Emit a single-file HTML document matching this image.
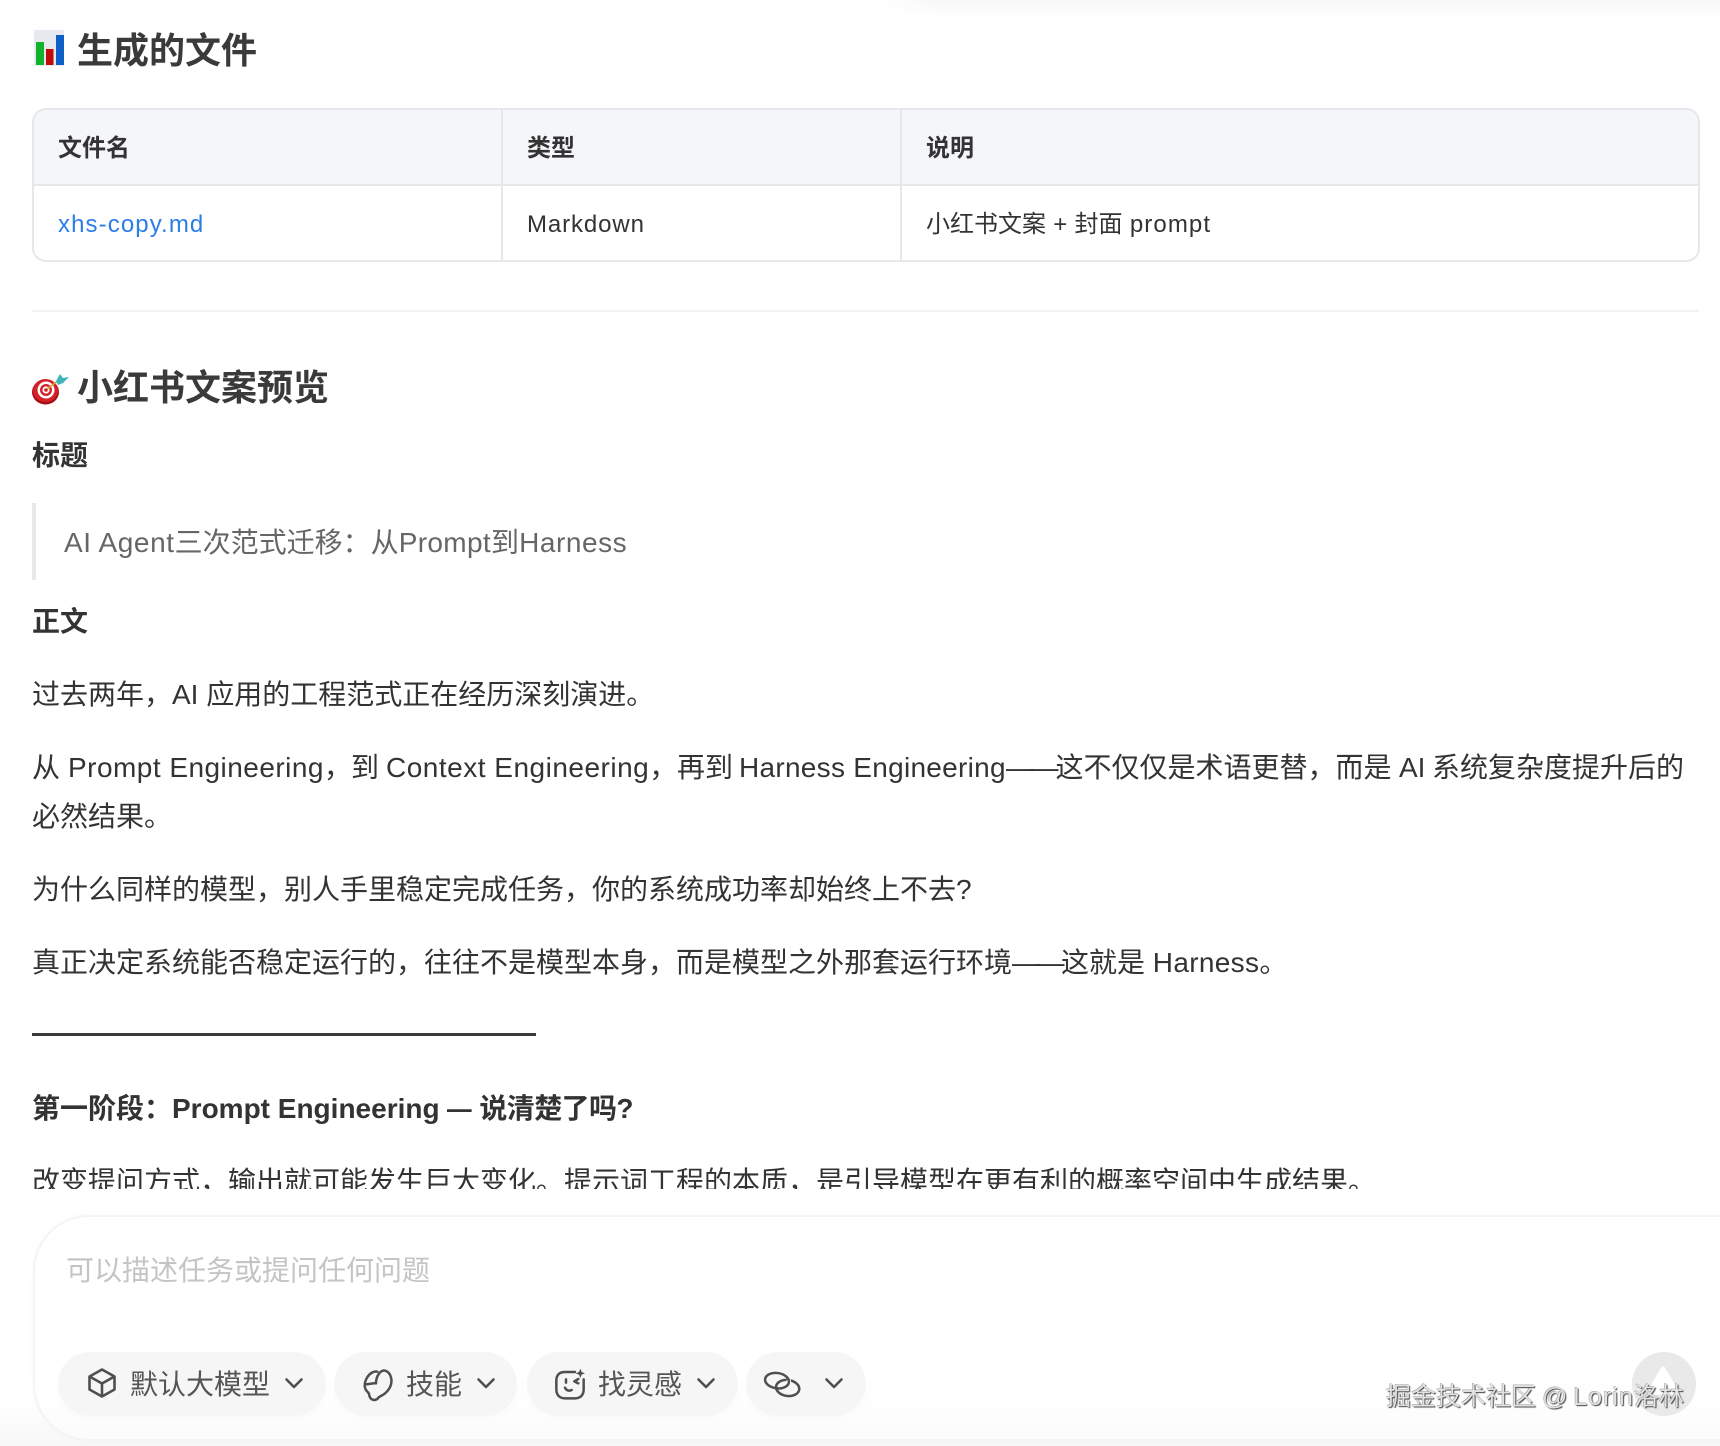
<!DOCTYPE html>
<html lang="zh-CN">
<head>
<meta charset="utf-8">
<title>小红书文案预览</title>
<style>
html,body{margin:0;padding:0;background:#fff}
body{width:1720px;height:1446px;position:relative;overflow:hidden;font-family:"Liberation Sans","Noto Sans CJK SC",sans-serif;color:#333;font-size:28px}
.t{position:absolute;white-space:nowrap;line-height:40px;height:40px}
.l{letter-spacing:.5px}
b,.b{font-weight:700}
h2{margin:0;position:absolute;font-size:36px;line-height:50px;font-weight:700;white-space:nowrap;color:#3a3a3a}
.a{position:absolute}
.pill{position:absolute;top:1352px;height:64px;background:#f6f6f6;border-radius:32px;box-shadow:0 4px 8px rgba(0,0,0,.012)}
svg{position:absolute;overflow:visible}
.ic{fill:none;stroke:#4f4f4f;stroke-linecap:round;stroke-linejoin:round}
.pt{position:absolute;top:1365px;line-height:40px;height:40px;font-size:28px;color:#555;white-space:nowrap}
</style>
</head>
<body>
<div class="a" style="left:880px;right:0;top:0;height:18px;background:linear-gradient(#f7f7f7,#fff);-webkit-mask-image:linear-gradient(90deg,transparent,#000 60px);mask-image:linear-gradient(90deg,transparent,#000 60px)"></div>

<svg style="left:0;top:0" width="80" height="70" viewBox="0 0 80 70">
<rect x="34" y="30" width="30" height="36" fill="#e6e9ef"/>
<rect x="36" y="42" width="8" height="23" fill="#10b32c"/>
<rect x="46" y="49" width="7.5" height="16" fill="#c00a0c"/>
<rect x="56" y="35" width="8" height="30" fill="#0f5fc8"/>
</svg>
<h2 style="left:77px;top:26px">生成的文件</h2>

<div class="a" style="left:32px;top:108px;width:1668px;height:154px;box-sizing:border-box;border:2px solid #e6e7ea;border-radius:14px;overflow:hidden">
  <div class="a" style="left:0;top:0;right:0;height:74px;background:#f5f6fa;border-bottom:2px solid #e6e7ea"></div>
  <div class="a" style="left:467px;top:0;bottom:0;width:2px;background:#e6e7ea"></div>
  <div class="a" style="left:866px;top:0;bottom:0;width:2px;background:#e6e7ea"></div>
</div>
<div class="t b" style="left:58px;top:129px;font-size:24px">文件名</div>
<div class="t b" style="left:527px;top:129px;font-size:24px">类型</div>
<div class="t b" style="left:926px;top:129px;font-size:24px">说明</div>
<div class="t" style="left:58px;top:205px;font-size:24px;color:#2b7de9;letter-spacing:1.1px">xhs-copy.md</div>
<div class="t" style="left:527px;top:205px;font-size:24px;letter-spacing:.9px">Markdown</div>
<div class="t" style="left:926px;top:205px;font-size:24px;word-spacing:.6px">小红书文案 + 封面 <span style="letter-spacing:1.1px">prompt</span></div>

<div class="a" style="left:32px;top:310px;width:1667px;height:2px;background:#f2f2f3"></div>

<svg style="left:0;top:360px" width="80" height="50" viewBox="0 360 80 50">
<ellipse cx="45.5" cy="392" rx="13.5" ry="12.5" fill="#a50e14"/>
<ellipse cx="45.5" cy="390.5" rx="12.5" ry="11.5" fill="#d5212a"/>
<circle cx="46" cy="390" r="8.5" fill="#fff"/>
<circle cx="46" cy="390" r="6" fill="#d5212a"/>
<circle cx="46" cy="390" r="3.6" fill="#fff"/>
<circle cx="46" cy="390" r="1.8" fill="#d5212a"/>
<path d="M47 389L59 380" stroke="#d9a441" stroke-width="1.6"/>
<path d="M56 381L60 374L63 378L69 377L63 383L58 385Z" fill="#3fb4bf"/>
</svg>
<h2 style="left:77px;top:363px">小红书文案预览</h2>

<div class="t b" style="left:32px;top:436px">标题</div>
<div class="a" style="left:32px;top:503px;width:4px;height:77px;background:#e8e8e8"></div>
<div class="t" style="left:64px;top:523px;color:#666"><span style="letter-spacing:.6px">AI Agent</span>三次范式迁移：从<span style="letter-spacing:.35px">Prompt</span>到<span style="letter-spacing:.55px">Harness</span></div>
<div class="t b" style="left:32px;top:602px">正文</div>
<div class="t" style="left:32px;top:675px">过去两年，AI 应用的工程范式正在经历深刻演进。</div>

<div class="t" style="left:32px;top:748px">从</div>
<div class="t" style="left:68px;top:748px;letter-spacing:.47px">Prompt Engineering，</div>
<div class="t" style="left:351px;top:748px">到</div>
<div class="t" style="left:386px;top:748px;letter-spacing:.5px">Context Engineering，</div>
<div class="t" style="left:677px;top:748px">再到</div>
<div class="t" style="left:739px;top:748px;letter-spacing:.28px">Harness Engineering</div>
<div class="t" style="left:1006px;top:748px;letter-spacing:-3.5px">——</div>
<div class="t" style="left:1055.5px;top:748px">这不仅仅是术语更替，而是</div>
<div class="t" style="left:1399px;top:748px">AI</div>
<div class="t" style="left:1432px;top:748px">系统复杂度提升后的</div>

<div class="t" style="left:32px;top:797px">必然结果。</div>
<div class="t" style="left:32px;top:870px">为什么同样的模型，别人手里稳定完成任务，你的系统成功率却始终上不去?</div>
<div class="t" style="left:32px;top:943px">真正决定系统能否稳定运行的，往往不是模型本身，而是模型之外那套运行环境<span style="letter-spacing:-3.5px">——</span>这就是 <span style="letter-spacing:.32px">Harness</span>。</div>
<div class="a" style="left:32px;top:1033px;width:504px;height:3px;background:#3a3a3a"></div>
<div class="t b" style="left:32px;top:1089px">第一阶段：</div>
<div class="t b" style="left:172px;top:1089px">Prompt Engineering</div>
<div class="t b" style="left:447px;top:1089px;transform:scaleX(.88);transform-origin:left">—</div>
<div class="t b" style="left:479.4px;top:1089px;letter-spacing:-.6px">说清楚了吗?</div>
<div class="t" style="left:32px;top:1162px">改变提问方式，输出就可能发生巨大变化。提示词工程的本质，是引导模型在更有利的概率空间中生成结果。</div>

<div class="a" style="left:0;top:1189px;width:1720px;height:257px;background:linear-gradient(#fff 82%,#f8f8f8)"></div>
<div class="a" style="left:33px;top:1215px;width:1760px;height:226px;box-sizing:border-box;border:2px solid #f4f4f4;border-radius:56px;background:linear-gradient(#fff 70%,#fcfcfc);box-shadow:0 0 14px rgba(0,0,0,.02)"></div>

<div class="t" style="left:66px;top:1251px;color:#c4c4c4">可以描述任务或提问任何问题</div>

<div class="pill" style="left:58px;width:268px"></div>
<svg style="left:87px;top:1368px" width="30" height="30" viewBox="0 0 30 30"><path class="ic" stroke-width="2.6" d="M15 1.5L27.5 8.5V21.5L15 28.5L2.5 21.5V8.5ZM3 8.8L15 15.5L27 8.8M15 15.5V28"/></svg>
<div class="pt" style="left:130px">默认大模型</div>
<svg style="left:285px;top:1378px" width="18" height="11" viewBox="0 0 18 11"><path class="ic" stroke-width="2.6" d="M1.5 1.5L9 9L16.5 1.5"/></svg>

<div class="pill" style="left:334px;width:183px"></div>
<svg style="left:350px;top:1360px" width="60" height="48" viewBox="0 0 180 144"><path class="ic" stroke-width="7.5" d="M78 70C78 48 92 28 106 32C124 38 130 65 118 85C110 100 96 106 86 112C80 122 68 122 62 115C55 107 60 100 52 95C42 85 42 70 50 55C58 40 72 32 82 35M48 73L78 69"/></svg>
<div class="pt" style="left:406px">技能</div>
<svg style="left:477px;top:1378px" width="18" height="11" viewBox="0 0 18 11"><path class="ic" stroke-width="2.6" d="M1.5 1.5L9 9L16.5 1.5"/></svg>

<div class="pill" style="left:527px;width:211px"></div>
<svg style="left:545px;top:1360px" width="60" height="48" viewBox="0 0 180 144"><path class="ic" stroke-width="7.5" d="M90 36H60C42 36 34 46 34 62V88C34 105 44 115 60 115H90C106 115 116 105 116 88V58M63 58V68M100 57L88 64L100 70M60 83C64 92 72 94 80 90"/><path d="M106 26L110 36L120 40L110 44L106 54L102 44L92 40L102 36Z" fill="#4f4f4f"/></svg>
<div class="pt" style="left:598px">找灵感</div>
<svg style="left:697px;top:1378px" width="18" height="11" viewBox="0 0 18 11"><path class="ic" stroke-width="2.6" d="M1.5 1.5L9 9L16.5 1.5"/></svg>

<div class="pill" style="left:746px;width:120px"></div>
<svg style="left:755px;top:1360px" width="60" height="48" viewBox="0 0 180 144"><ellipse class="ic" stroke-width="7.5" cx="98" cy="84" rx="35" ry="24" transform="rotate(8 98 84)"/><path d="M88 84C100 78 104 66 100 58" fill="none" stroke="#f6f6f6" stroke-width="13"/><ellipse class="ic" stroke-width="7.5" cx="66" cy="62" rx="36" ry="23" transform="rotate(8 66 62)"/></svg>
<svg style="left:825px;top:1378px" width="18" height="11" viewBox="0 0 18 11"><path class="ic" stroke-width="2.6" d="M1.5 1.5L9 9L16.5 1.5"/></svg>

<div class="a" style="left:1632px;top:1352px;width:64px;height:64px;border-radius:50%;background:#e9e9e9"></div>
<svg style="left:1632px;top:1352px" width="64" height="64" viewBox="0 0 64 64"><path d="M31 17L44 40H18Z" fill="#fff" stroke="#fff" stroke-width="5" stroke-linejoin="round"/></svg>
<div class="t" style="left:1386px;top:1377px;font-size:25px;color:#e2e2e2;text-shadow:1px 1px 1px #444,-.5px -.5px 0 #999;word-spacing:-1px">掘金技术社区 @ <span style="letter-spacing:1px">Lorin</span>洛林</div>
</body>
</html>
